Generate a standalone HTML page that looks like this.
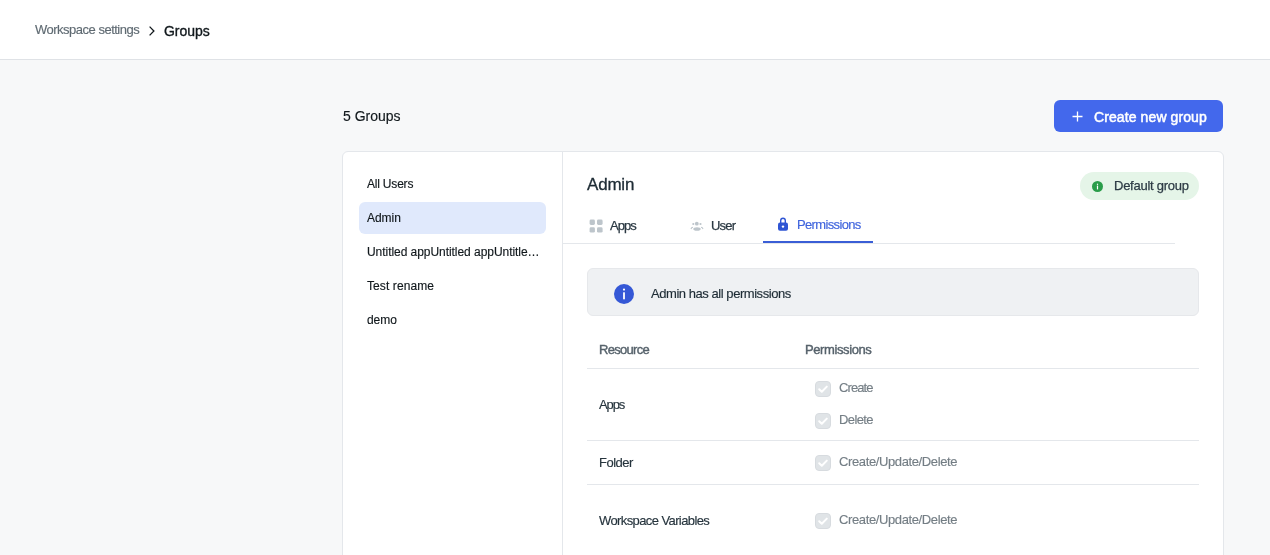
<!DOCTYPE html>
<html>
<head>
<meta charset="utf-8">
<style>
html,body{margin:0;padding:0;}
body{width:1270px;height:555px;overflow:hidden;background:#f7f8f9;font-family:"Liberation Sans",sans-serif;position:relative;color:#11181c;}
.abs{position:absolute;white-space:nowrap;will-change:transform;-webkit-text-stroke-width:0.15px;}
#header{position:absolute;left:0;top:0;width:1270px;height:59px;background:#fff;border-bottom:1px solid #dfe2e6;}
.crumb{font-size:13px;color:#5f6a72;letter-spacing:-0.5px;}
.crumb-b{font-size:14px;color:#11181c;-webkit-text-stroke:0.35px #11181c;letter-spacing:-0.05px;}
#btn{position:absolute;left:1054px;top:100px;width:169px;height:32px;background:#4368ec;border-radius:6px;}
#card{position:absolute;left:342px;top:151px;width:880px;height:420px;background:#fff;border:1px solid #e4e7eb;border-radius:6px;}
#sidediv{position:absolute;left:562px;top:152px;width:1px;height:410px;background:#e4e7eb;}
.side{font-size:12px;color:#11181c;letter-spacing:-0.05px;}
#active{position:absolute;left:359px;top:202px;width:187px;height:32px;background:#e0e9fc;border-radius:6px;}
.tab{font-size:13px;color:#2b3943;-webkit-text-stroke:0.25px #2b3943;}
#tabline{position:absolute;left:563px;top:243px;width:612px;height:1px;background:#e4e7eb;}
#tabactive{position:absolute;left:763px;top:241px;width:110px;height:2px;background:#3a5ed6;}
#info{position:absolute;left:587px;top:268px;width:610px;height:46px;background:#eff1f3;border:1px solid #e6e8eb;border-radius:6px;}
.hline{position:absolute;left:587px;width:612px;height:1px;background:#e4e7eb;}
.th{font-size:13px;color:#56626b;-webkit-text-stroke:0.4px #56626b;}
.td{font-size:13px;color:#26343d;}
.perm{font-size:13px;color:#747e85;}
.cb{position:absolute;width:16px;height:16px;}
</style>
</head>
<body>
<div id="header"></div>
<div class="abs crumb" style="left:35px;top:22px;">Workspace settings</div>
<svg class="abs" style="left:148px;top:26px;" width="8" height="10" viewBox="0 0 8 10"><path d="M1.6 0.6 L5.9 5 L1.6 9.4" fill="none" stroke="#11181c" stroke-width="1.3"/></svg>
<div class="abs crumb-b" style="left:164px;top:23px;">Groups</div>

<div class="abs" style="left:343px;top:108px;font-size:14px;color:#11181c;">5 Groups</div>

<div id="btn"></div>
<svg class="abs" style="left:1072px;top:111px;" width="11" height="11" viewBox="0 0 11 11"><path d="M5.5 0.5 V10.5 M0.5 5.5 H10.5" stroke="#fff" stroke-width="1.3" fill="none"/></svg>
<div class="abs" style="left:1094px;top:108.5px;font-size:14px;color:#fff;-webkit-text-stroke:0.5px #fff;letter-spacing:0.1px;">Create new group</div>

<div id="card"></div>
<div id="sidediv"></div>
<div id="active"></div>
<div class="abs side" style="left:367px;top:177px;letter-spacing:-0.2px;">All Users</div>
<div class="abs side" style="left:367px;top:211px;">Admin</div>
<div class="abs side" style="left:367px;top:245px;">Untitled appUntitled appUntitle…</div>
<div class="abs side" style="left:367px;top:279px;letter-spacing:0.1px;">Test rename</div>
<div class="abs side" style="left:367px;top:313px;">demo</div>

<div class="abs" style="left:587px;top:175px;font-size:17px;color:#1d2b34;-webkit-text-stroke:0.3px #1d2b34;letter-spacing:-0.2px;">Admin</div>

<div class="abs" style="left:1080px;top:172px;width:119px;height:28px;background:#e5f5e8;border-radius:14px;"></div>
<svg class="abs" style="left:1092px;top:181px;" width="11" height="11" viewBox="0 0 11 11"><circle cx="5.5" cy="5.5" r="5.5" fill="#2a9d4a"/><rect x="4.9" y="4.6" width="1.2" height="3.8" fill="#fff"/><rect x="4.9" y="2.7" width="1.2" height="1.2" fill="#fff"/></svg>
<div class="abs" style="left:1114px;top:178px;font-size:13px;color:#2d3b45;-webkit-text-stroke:0.25px #2d3b45;letter-spacing:-0.25px;">Default group</div>

<svg class="abs" style="left:589px;top:219px;" width="14" height="14" viewBox="0 0 14 14"><g fill="#bdc5cb"><rect x="0.6" y="0.6" width="5.3" height="5.3" rx="1.4"/><rect x="8" y="0.6" width="5.6" height="5.3" rx="1.4"/><rect x="0.6" y="8.3" width="5.3" height="5.3" rx="1.4"/><rect x="8" y="8.3" width="5.6" height="5.3" rx="1.4"/></g></svg>
<div class="abs tab" style="left:610px;top:218px;letter-spacing:-1px;">Apps</div>
<svg class="abs" style="left:690px;top:220px;" width="14" height="12" viewBox="0 0 14 12"><g fill="#bdc5cb"><circle cx="6.8" cy="3.7" r="1.9"/><circle cx="3.3" cy="4" r="1.1"/><circle cx="10.5" cy="4" r="1.1"/><ellipse cx="7" cy="9" rx="3.7" ry="1.8"/></g><g fill="none" stroke="#bdc5cb" stroke-width="1.1"><path d="M1 9 Q1.5 7.3 3 7.3"/><path d="M13 9 Q12.5 7.3 11 7.3"/></g></svg>
<div class="abs tab" style="left:711px;top:218px;letter-spacing:-0.8px;">User</div>
<svg class="abs" style="left:778px;top:217px;" width="11" height="14" viewBox="0 0 11 14"><path d="M2.7 6.5 V3.6 A2.3 2.3 0 0 1 7.3 3.6 V6.5" fill="none" stroke="#2f55d4" stroke-width="1.4"/><rect x="0" y="5.6" width="10" height="8.2" rx="2" fill="#2f55d4"/><circle cx="5" cy="9.6" r="1.2" fill="#fff"/></svg>
<div class="abs tab" style="left:797px;top:217px;color:#3e63dd;-webkit-text-stroke:0.15px #3e63dd;letter-spacing:-0.65px;">Permissions</div>
<div id="tabline"></div>
<div id="tabactive"></div>

<div id="info"></div>
<svg class="abs" style="left:614px;top:284px;" width="20" height="20" viewBox="0 0 20 20"><circle cx="10" cy="10" r="10" fill="#3558d6"/><rect x="9.1" y="8.3" width="1.8" height="7" fill="#fff"/><circle cx="10" cy="5.6" r="1.1" fill="#fff"/></svg>
<div class="abs" style="left:651px;top:286px;font-size:13px;color:#1d2b34;letter-spacing:-0.45px;">Admin has all permissions</div>

<div class="abs th" style="left:599px;top:342px;letter-spacing:-0.7px;">Resource</div>
<div class="abs th" style="left:805px;top:342px;letter-spacing:-0.4px;">Permissions</div>
<div class="hline" style="top:368px;"></div>

<div class="abs td" style="left:599px;top:397px;letter-spacing:-1.1px;">Apps</div>
<svg class="cb" style="left:815px;top:381px;" viewBox="0 0 16 16"><rect x="0.5" y="0.5" width="15" height="15" rx="3.5" fill="#e0e4e7" stroke="#d7dbdf"/><path d="M4.2 8.2 L6.8 10.8 L11.8 5.6" fill="none" stroke="#fff" stroke-width="2" stroke-linecap="round" stroke-linejoin="round"/></svg>
<div class="abs perm" style="left:839px;top:380px;letter-spacing:-0.9px;">Create</div>
<svg class="cb" style="left:815px;top:413px;" viewBox="0 0 16 16"><rect x="0.5" y="0.5" width="15" height="15" rx="3.5" fill="#e0e4e7" stroke="#d7dbdf"/><path d="M4.2 8.2 L6.8 10.8 L11.8 5.6" fill="none" stroke="#fff" stroke-width="2" stroke-linecap="round" stroke-linejoin="round"/></svg>
<div class="abs perm" style="left:839px;top:412px;letter-spacing:-0.6px;">Delete</div>
<div class="hline" style="top:440px;"></div>

<div class="abs td" style="left:599px;top:455px;letter-spacing:-0.5px;">Folder</div>
<svg class="cb" style="left:815px;top:455px;" viewBox="0 0 16 16"><rect x="0.5" y="0.5" width="15" height="15" rx="3.5" fill="#e0e4e7" stroke="#d7dbdf"/><path d="M4.2 8.2 L6.8 10.8 L11.8 5.6" fill="none" stroke="#fff" stroke-width="2" stroke-linecap="round" stroke-linejoin="round"/></svg>
<div class="abs perm" style="left:839px;top:453.5px;letter-spacing:-0.38px;">Create/Update/Delete</div>
<div class="hline" style="top:484px;"></div>

<div class="abs td" style="left:599px;top:512.5px;letter-spacing:-0.6px;">Workspace Variables</div>
<svg class="cb" style="left:815px;top:513px;" viewBox="0 0 16 16"><rect x="0.5" y="0.5" width="15" height="15" rx="3.5" fill="#e0e4e7" stroke="#d7dbdf"/><path d="M4.2 8.2 L6.8 10.8 L11.8 5.6" fill="none" stroke="#fff" stroke-width="2" stroke-linecap="round" stroke-linejoin="round"/></svg>
<div class="abs perm" style="left:839px;top:511.5px;letter-spacing:-0.38px;">Create/Update/Delete</div>
</body>
</html>
